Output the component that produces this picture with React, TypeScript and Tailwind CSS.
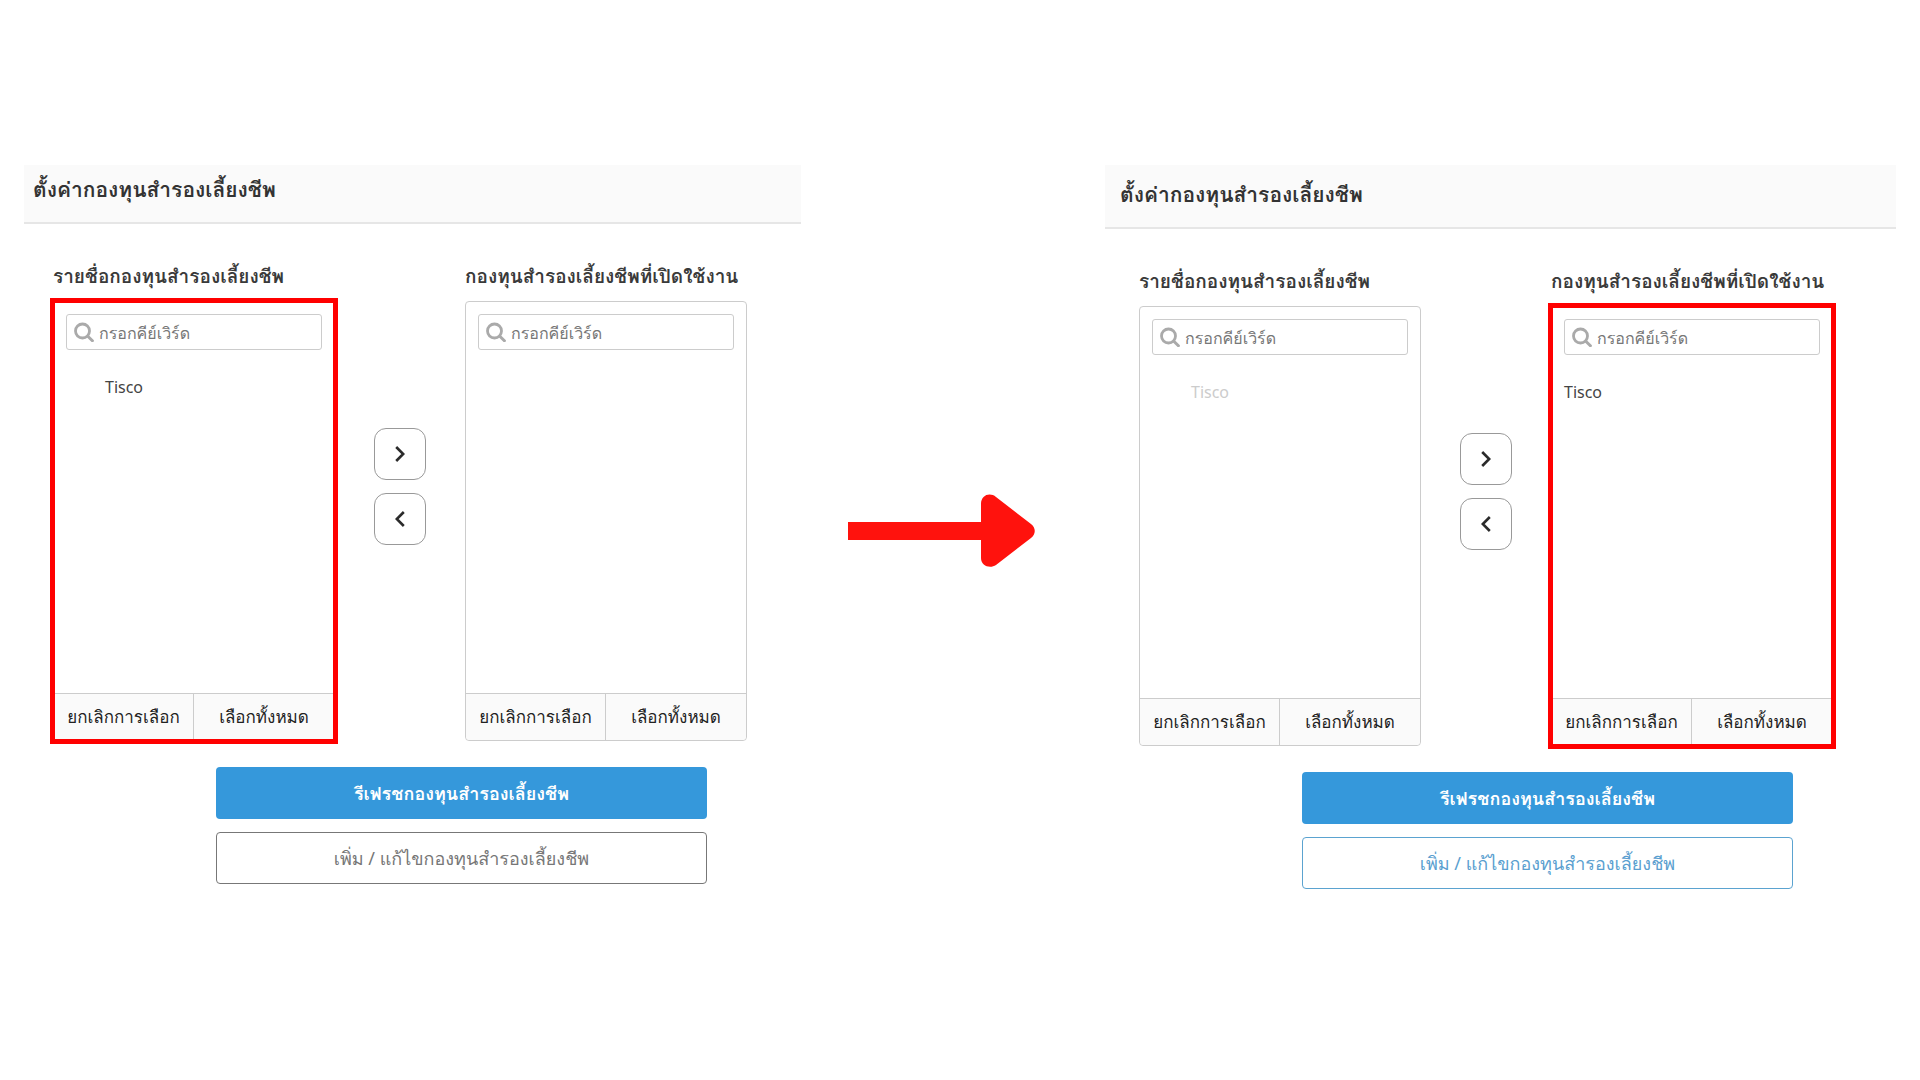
import { clsx } from 'clsx'

interface FundListProps {
  id: string
  label: string
  items: string[]
  indent?: boolean
  disabled?: boolean
  highlighted?: boolean
}

interface SettingsPanelProps {
  id: string
  available: string[]
  enabled: string[]
  highlight: 'available' | 'enabled'
  roomy?: boolean
}

function SearchIcon() {
  return (
    <svg viewBox="0 0 20 20" className="absolute left-2 top-2 h-5 w-5" fill="none" stroke="#aaaaaa" aria-hidden="true">
      <circle cx="8.5" cy="9" r="7" strokeWidth="2.8" />
      <path d="M13.8 14.2 L18.4 18.8" strokeWidth="3" strokeLinecap="round" />
    </svg>
  )
}

function Chevron({ direction }: { direction: 'left' | 'right' }) {
  return (
    <svg viewBox="0 0 10 16" className="h-4 w-2.5" fill="none" stroke="#2b2b2b" strokeWidth="2.6" aria-hidden="true">
      <path d={direction === 'right' ? 'M1.2 1 L8.2 8 L1.2 15' : 'M8.8 1 L1.8 8 L8.8 15'} />
    </svg>
  )
}

function FundList({ id, label, items, indent, disabled, highlighted }: FundListProps) {
  return (
    <section className="min-w-0 flex-1">
      <label htmlFor={id} className="block whitespace-nowrap text-[19px] leading-6 font-bold text-[#3a3a3a]">
        {label}
      </label>
      <div className="relative mt-[13px] flex h-[440px] flex-col rounded border border-[#cccccc]">
        <div className="relative mx-3 mt-3">
          <SearchIcon />
          <input
            id={id}
            type="text"
            placeholder="กรอกคีย์เวิร์ด"
            className="h-9 w-full rounded-[3px] border border-[#cccccc] pt-0.5 pl-8 text-base text-[#555555] outline-none placeholder:text-[#777777]"
          />
        </div>
        <ul className="mt-[25px] flex-1">
          {items.map((item) => (
            <li key={item}>
              <button
                disabled={disabled}
                className={clsx(
                  'w-full pr-3 text-left text-base leading-6',
                  indent ? 'pl-[51px]' : 'pl-3',
                  disabled ? 'text-[#cccccc]' : 'text-[#444444]'
                )}
              >
                {item}
              </button>
            </li>
          ))}
        </ul>
        <div className="grid h-[47px] grid-cols-2 rounded-b border-t border-[#cccccc] bg-[#fafafa] text-[17px] text-[#222222]">
          <button className="whitespace-nowrap border-r border-[#cccccc]">ยกเลิกการเลือก</button>
          <button className="whitespace-nowrap">เลือกทั้งหมด</button>
        </div>
        {highlighted && <div className="pointer-events-none absolute -inset-1 border-[5px] border-[#ff0000]" />}
      </div>
    </section>
  )
}

function SettingsPanel({ id, available, enabled, highlight, roomy }: SettingsPanelProps) {
  return (
    <article>
      <header className={clsx('border-b-2 border-[#e6e6e6] bg-[#fafafa] pb-[21px]', roomy ? 'pt-[17px] pl-[15px]' : 'pt-3 pl-[9px]')}>
        <h2 className="text-[21px] leading-6 font-bold text-[#333333]">ตั้งค่ากองทุนสำรองเลี้ยงชีพ</h2>
      </header>
      <div className={clsx('pt-10', roomy ? 'max-w-[728px] pl-[34px]' : 'max-w-[723px] pl-[29px]')}>
        <div className="flex gap-[39px]">
          <FundList
            id={`${id}-available`}
            label="รายชื่อกองทุนสำรองเลี้ยงชีพ"
            items={available}
            indent
            disabled={enabled.length > 0}
            highlighted={highlight === 'available'}
          />
          <div className="flex flex-col gap-[13px] pt-[164px]">
            <button aria-label="เพิ่ม" className="flex h-[52px] w-[52px] items-center justify-center rounded-xl border border-[#999999]">
              <Chevron direction="right" />
            </button>
            <button aria-label="ลบ" className="flex h-[52px] w-[52px] items-center justify-center rounded-xl border border-[#999999]">
              <Chevron direction="left" />
            </button>
          </div>
          <FundList
            id={`${id}-enabled`}
            label="กองทุนสำรองเลี้ยงชีพที่เปิดใช้งาน"
            items={enabled}
            highlighted={highlight === 'enabled'}
          />
        </div>
        <div className="mt-[26px] flex flex-col gap-[13px] pr-10 pl-[163px]">
          <button className="h-[52px] rounded bg-[#3598db] text-lg font-semibold text-white">
            รีเฟรชกองทุนสำรองเลี้ยงชีพ
          </button>
          <button
            className={clsx(
              'h-[52px] rounded border text-lg',
              roomy ? 'border-[#5ba3d0] text-[#5b9fd0]' : 'border-[#777777] text-[#777777]'
            )}
          >
            เพิ่ม / แก้ไขกองทุนสำรองเลี้ยงชีพ
          </button>
        </div>
      </div>
    </article>
  )
}

export default function App() {
  return (
    <main className="grid min-h-screen grid-cols-[777fr_304fr_791fr] bg-white px-6 pt-[165px] font-['Noto_Sans','Waree','Loma','Noto_Sans_Thai_Looped','Tlwg_Typo',sans-serif]">
      <SettingsPanel id="before" available={['Tisco']} enabled={[]} highlight="available" />
      <div className="flex justify-start pt-[329px] pl-[47px]">
        <svg viewBox="0 0 188 74" className="h-[74px] w-[188px]" fill="#ff120d" aria-hidden="true">
          <path d="M0 28 H133 V10 C133 1 142 -2 148 3 L183 30 C188 34 188 40 183 44 L148 71 C142 75 133 72 133 64 V46 H0 Z" />
        </svg>
      </div>
      <SettingsPanel id="after" available={['Tisco']} enabled={['Tisco']} highlight="enabled" roomy />
    </main>
  )
}
